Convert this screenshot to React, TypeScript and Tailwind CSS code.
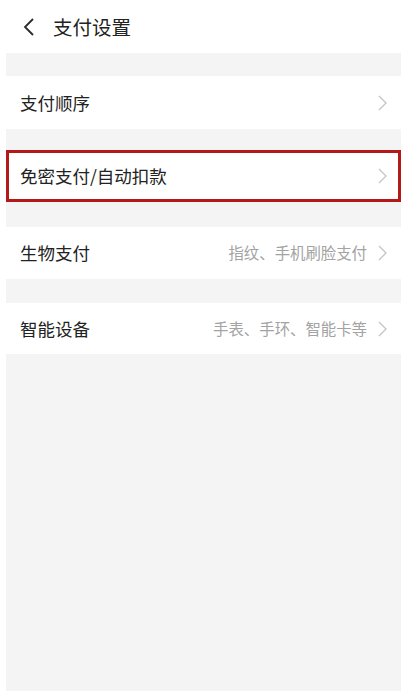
import React from 'react';

const FONT = { fontFamily: '"Noto Sans CJK SC", "Noto Sans", sans-serif' };

const Chevron: React.FC = () => (
  <svg width="9" height="16" viewBox="0 0 9 16" fill="none" className="shrink-0">
    <polyline points="1,1 8,8 1,15" stroke="#c4c4c4" strokeWidth="1.3" fill="none" />
  </svg>
);

interface RowProps {
  label: string;
  hint?: string;
  className?: string;
}

const Row: React.FC<RowProps> = ({ label, hint, className = '' }) => (
  <div className={`flex items-center justify-between bg-white pr-[14px] ${className}`}>
    <span className="text-[17.5px] text-[#222222] leading-none">{label}</span>
    <div className="flex items-center gap-[11px]">
      {hint && <span className="text-[15.4px] text-[#a3a3a3] leading-none">{hint}</span>}
      <Chevron />
    </div>
  </div>
);

export default function App() {
  return (
    <div className="w-full h-[691px] bg-white flex flex-col overflow-hidden" style={FONT}>
      {/* Header */}
      <div className="h-[53px] flex items-center bg-white pl-[23px] shrink-0">
        <svg width="12" height="18" viewBox="0 0 12 18" fill="none">
          <polyline points="10,1 2,9 10,17" stroke="#2a2a2a" strokeWidth="1.8" fill="none" />
        </svg>
        <span className="ml-[18px] text-[19.5px] text-[#222222] leading-none">支付设置</span>
      </div>

      {/* Content */}
      <div className="flex-1 ml-[6px] mr-[5px] bg-[#f4f4f4] flex flex-col">
        <div className="h-[23px]" />
        <Row label="支付顺序" className="h-[53px] pl-[14px]" />
        <div className="h-[21px]" />
        <Row
          label="免密支付/自动扣款"
          className="h-[52px] pl-[11px] border-[3px] border-[#b3191a] !pr-[11px]"
        />
        <div className="h-[25px]" />
        <Row label="生物支付" hint="指纹、手机刷脸支付" className="h-[52px] pl-[14px]" />
        <div className="h-[24px]" />
        <Row label="智能设备" hint="手表、手环、智能卡等" className="h-[51px] pl-[14px]" />
      </div>
    </div>
  );
}
